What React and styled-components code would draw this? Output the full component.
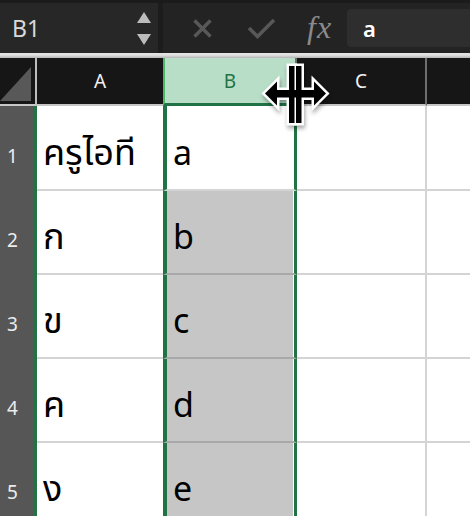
import React from 'react'
import styled, { createGlobalStyle } from 'styled-components'

const GlobalStyle = createGlobalStyle`
  html, body {
    margin: 0;
    padding: 0;
    background: #ffffff;
    overflow: hidden;
  }
  body {
    font-family: "Noto Sans", "Open Sans", sans-serif;
  }
`

const GREEN = '#217346'

const Window = styled.div`
  position: relative;
  width: 470px;
  height: 516px;
  overflow: hidden;
  background: #ffffff;
`

const Toolbar = styled.div`
  display: flex;
  align-items: stretch;
  height: 53px;
  box-sizing: border-box;
  border-top: 3px solid #1b1b1b;
  background: #232323;
`

const NameBox = styled.div`
  display: flex;
  align-items: center;
  width: 158px;
  box-sizing: border-box;
  padding: 0 7px 0 12px;
  background: #272727;
  color: #d9d9d9;
  font-size: 23px;
`

const Spinner = styled.div`
  display: flex;
  flex-direction: column;
  gap: 11px;
  margin-left: auto;
`

const Arrow = styled.span`
  width: 0;
  height: 0;
  border-left: 7px solid transparent;
  border-right: 7px solid transparent;
  ${(p) => (p.$down ? 'border-top' : 'border-bottom')}: 11px solid #bcbcbc;
`

const Divider = styled.div`
  width: 5px;
  background: #1c1c1c;
`

const ToolIcon = styled.div`
  display: flex;
  align-items: center;
  margin-left: ${(p) => p.$gap}px;
`

const Fx = styled.span`
  display: flex;
  align-items: center;
  margin-left: 31px;
  padding-bottom: 2px;
  font-family: "Liberation Serif", "DejaVu Serif", serif;
  font-style: italic;
  font-size: 32px;
  color: #8a8a8a;
  letter-spacing: 1px;
`

const FormulaBox = styled.div`
  flex: 1;
  align-self: center;
  display: flex;
  align-items: center;
  height: 38px;
  margin-left: 15px;
  padding-left: 16px;
  border-radius: 4px 0 0 4px;
  background: #2e2e2e;
  color: #ffffff;
  font-size: 22px;
  font-weight: 600;
`

const Ruler = styled.div`
  height: 5px;
  background: linear-gradient(#e2e2e2 0, #e2e2e2 40%, #b4b4b4 100%);
`

const Grid = styled.div`
  display: grid;
  grid-template-columns: 37px 126px 134px 130px 1fr;
  grid-template-rows: 48px 85px repeat(4, 84px);
`

const Corner = styled.div`
  display: flex;
  align-items: flex-end;
  justify-content: flex-end;
  box-sizing: border-box;
  padding: 0 4px 3px 0;
  background: #161616;
  border-right: 2px solid #bdbdbd;
  border-bottom: 2px solid #c6c6c6;
`

const Triangle = styled.div`
  width: 31px;
  height: 34px;
  background: #585858;
  clip-path: polygon(100% 0, 100% 100%, 0 100%);
`

const ColHead = styled.div`
  display: flex;
  align-items: center;
  justify-content: center;
  box-sizing: border-box;
  background: ${(p) => (p.$active ? '#b9dec8' : '#161616')};
  color: ${(p) => (p.$active ? GREEN : '#f2f2f2')};
  font-size: 19px;
  border-bottom: ${(p) => (p.$active ? `3px solid ${GREEN}` : '2px solid #c6c6c6')};
  border-left: ${(p) => (p.$active ? '2px solid #4cb86a' : 'none')};
  border-right: ${(p) => (p.$divider ? '2px solid #6e6e6e' : 'none')};
`

const RowHead = styled.div`
  display: flex;
  align-items: flex-end;
  justify-content: center;
  box-sizing: border-box;
  padding: 0 9px 24px 0;
  background: #565656;
  border-right: 3px solid ${GREEN};
  color: #ececec;
  font-size: 19px;
  line-height: 22px;
`

const cellBorder = {
  A: 'border-right: none; font-size: 36px;',
  B: `border-left: 4px solid ${GREEN}; border-right: 3px solid ${GREEN}; box-shadow: inset -1px 0 0 #ffffff;`,
  C: 'border-right: 2px solid #d4d4d4;',
  D: 'border-right: none;',
}

const Cell = styled.div`
  display: flex;
  align-items: flex-end;
  box-sizing: border-box;
  padding: 0 0 17px 6px;
  background: ${(p) => (p.$selected ? '#c6c6c6' : '#ffffff')};
  border-bottom: 2px solid ${(p) => (p.$selected ? '#a9a9a9' : '#d4d4d4')};
  color: #000000;
  font-family: "Noto Sans", "Noto Sans Thai", "Open Sans", sans-serif;
  font-size: 34px;
  line-height: 40px;
  white-space: nowrap;
  overflow: hidden;
  ${(p) => cellBorder[p.$col]}
`

const CursorArt = styled.svg`
  position: absolute;
  left: 258px;
  top: 56px;
  width: 76px;
  height: 76px;
  filter: drop-shadow(1px 3px 2px rgba(0, 0, 0, 0.35));
  pointer-events: none;
`

const XIcon = () => (
  <svg width="21" height="21" viewBox="0 0 21 21">
    <path d="M2.5 2.5 L18.5 18.5 M18.5 2.5 L2.5 18.5" stroke="#585858" strokeWidth="3.4" fill="none" />
  </svg>
)

const CheckIcon = () => (
  <svg width="29" height="22" viewBox="0 0 29 22">
    <path d="M2 11 L10.5 19.5 L27 3" stroke="#585858" strokeWidth="3.6" fill="none" />
  </svg>
)

const cursorShapes = (
  <>
    <rect x="289" y="66" width="5.5" height="57" />
    <rect x="296" y="66" width="5.5" height="57" />
    <rect x="274" y="90" width="43" height="7.5" />
    <polygon points="265,93.5 277,81.5 277,105.5" />
    <polygon points="326,93.5 314,81.5 314,105.5" />
  </>
)

const ResizeCursor = () => (
  <CursorArt viewBox="258 56 76 76">
    <g fill="#ffffff" stroke="#ffffff" strokeWidth="5" strokeLinejoin="miter">
      {cursorShapes}
    </g>
    <g fill="#000000">{cursorShapes}</g>
  </CursorArt>
)

const rows = [
  { n: 1, a: 'ครูไอที', b: 'a' },
  { n: 2, a: 'ก', b: 'b' },
  { n: 3, a: 'ข', b: 'c' },
  { n: 4, a: 'ค', b: 'd' },
  { n: 5, a: 'ง', b: 'e' },
]

export default function App() {
  return (
    <Window>
      <GlobalStyle />
      <Toolbar>
        <NameBox>
          B1
          <Spinner>
            <Arrow />
            <Arrow $down />
          </Spinner>
        </NameBox>
        <Divider />
        <ToolIcon $gap={29}>
          <XIcon />
        </ToolIcon>
        <ToolIcon $gap={34}>
          <CheckIcon />
        </ToolIcon>
        <Fx>fx</Fx>
        <FormulaBox>a</FormulaBox>
      </Toolbar>
      <Ruler />
      <Grid>
        <Corner>
          <Triangle />
        </Corner>
        <ColHead>A</ColHead>
        <ColHead $active $divider>B</ColHead>
        <ColHead $divider>C</ColHead>
        <ColHead />
        {rows.map((r) => (
          <React.Fragment key={r.n}>
            <RowHead>{r.n}</RowHead>
            <Cell $col="A">{r.a}</Cell>
            <Cell $col="B" $selected={r.n > 1}>{r.b}</Cell>
            <Cell $col="C" />
            <Cell $col="D" />
          </React.Fragment>
        ))}
      </Grid>
      <ResizeCursor />
    </Window>
  )
}
